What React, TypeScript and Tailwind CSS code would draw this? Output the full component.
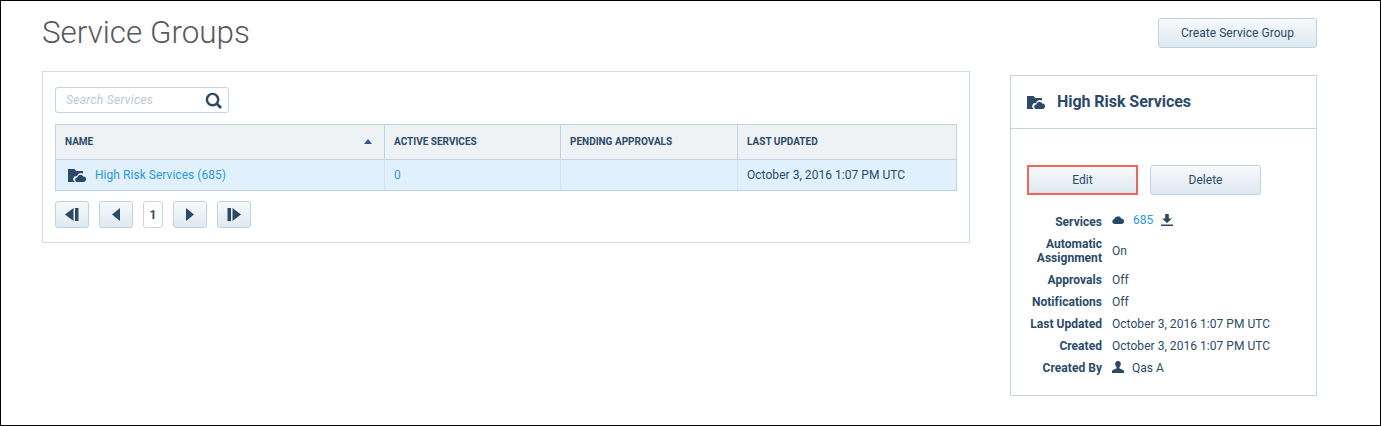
function FolderCloud({ className }: { className?: string }) {
  return (
    <svg viewBox="0 0 18 13" className={className} fill="currentColor">
      <path d="M0 0h6.500l1.500 2h7v2.600a4 4 0 0 0-5.900 2.400A3.200 3.200 0 0 0 7 13H0z" />
      <path d="M9.500 13a2.200 2.200 0 0 1-.3-4.400 3.200 3.200 0 0 1 6-1 2.700 2.700 0 0 1 2.800 2.700A2.700 2.700 0 0 1 15.300 13z" />
    </svg>
  );
}

function PagerButton({ children }: { children: React.ReactNode }) {
  return (
    <button className="flex h-[27px] w-[34px] items-center justify-center rounded-[3px] border border-[#bdd2e2] bg-gradient-to-b from-[#f8fafb] to-[#dfe9f1]">
      {children}
    </button>
  );
}

function ActionButton({ label, className }: { label: string; className: string }) {
  return (
    <button className={`flex h-[30px] items-center justify-center bg-gradient-to-b from-[#f8fafb] to-[#dce8f0] text-[12px] text-[#2a4a68] ${className}`}>
      {label}
    </button>
  );
}

function Detail({ label, children }: { label: React.ReactNode; children: React.ReactNode }) {
  return (
    <div className="flex items-center">
      <div className="w-[75px] text-right font-bold leading-[14px]">{label}</div>
      <div className="ml-[10px] flex items-center leading-[14px]">{children}</div>
    </div>
  );
}

export default function App() {
  const date = "October 3, 2016 1:07 PM UTC";
  return (
    <div className="h-[426px] w-[1381px] border border-black bg-white pl-[41px] pr-[63px] font-['Roboto',sans-serif] text-[12px] tracking-[0.04px] text-[#2a4a68] antialiased">
      <div className="flex items-start justify-between pt-[17px]">
        <h1 className="text-[31.4px] font-light leading-[30px] tracking-normal text-[#55595d]">Service Groups</h1>
        <ActionButton label="Create Service Group" className="w-[159px] rounded-[3px] border border-[#bdd2e2]" />
      </div>

      <div className="flex items-start justify-between">
        <section className="mt-[23px] h-[172px] w-[928px] border border-[#d0dce6] px-3 pt-[15px]">
          <div className="flex h-[26px] w-[174px] items-center justify-between rounded-[3px] border border-[#c5d6e4] pl-[10px] pr-[6px]">
            <span className="text-[12px] italic tracking-[0.3px] text-[#b9c9d8]">Search Services</span>
            <svg viewBox="0 0 18 18" className="h-[17px] w-[17px] text-[#2a4a68]" fill="none" stroke="currentColor">
              <circle cx="8" cy="8" r="6" strokeWidth="2.6" />
              <path d="M12.500 12.500L17 17" strokeWidth="3" />
            </svg>
          </div>

          <div className="mt-[11px] w-[902px] border border-[#c3d2e0]">
            <div className="flex h-[35px] border-b border-[#c3d2e0] bg-[#eff2f5] pb-[1px] text-[10px] font-bold tracking-normal">
              <div className="-mb-[1px] flex w-[329px] items-center justify-between border-r border-[#c3d2e0] pb-[1px] pl-[9px] pr-[12px]">
                <span>NAME</span>
                <span className="h-0 w-0 border-x-[4px] border-b-[5px] border-x-transparent border-b-[#2f5a86]" />
              </div>
              <div className="-mb-[1px] flex w-[176px] items-center border-r border-[#c3d2e0] pb-[1px] pl-[9px]">ACTIVE SERVICES</div>
              <div className="-mb-[1px] flex w-[177px] items-center border-r border-[#c3d2e0] pb-[1px] pl-[9px]">PENDING APPROVALS</div>
              <div className="flex flex-1 items-center pl-[9px]">LAST UPDATED</div>
            </div>
            <div className="flex h-[30px] bg-[#e0f1fd]">
              <div className="flex w-[329px] items-center border-r border-[#d2e4f0] pl-[12px] text-[#2d97dc]">
                <FolderCloud className="h-[13px] w-[18px] text-[#2a4a68]" />
                <span className="ml-[9px]">High Risk Services (685)</span>
              </div>
              <div className="flex w-[176px] items-center border-r border-[#d2e4f0] pl-[9px] text-[#2d97dc]">0</div>
              <div className="w-[177px] border-r border-[#d2e4f0]" />
              <div className="flex flex-1 items-center pl-[9px]">{date}</div>
            </div>
          </div>

          <div className="mt-[10px] flex items-center gap-[10px]">
            <PagerButton>
              <svg viewBox="0 0 14 13" className="h-[13px] w-[14px]" fill="#2a4a68"><path d="M8.500 0v13L0 6.500zM10 0h3.500v13H10z" /></svg>
            </PagerButton>
            <PagerButton>
              <svg viewBox="0 0 8 13" className="h-[13px] w-[8px]" fill="#2a4a68"><path d="M8 0v13L0 6.500z" /></svg>
            </PagerButton>
            <div className="flex h-[27px] w-[20px] items-center justify-center rounded-[3px] border border-[#c5d6e4] font-bold">1</div>
            <PagerButton>
              <svg viewBox="0 0 8 13" className="h-[13px] w-[8px]" fill="#2a4a68"><path d="M0 0v13l8-6.500z" /></svg>
            </PagerButton>
            <PagerButton>
              <svg viewBox="0 0 14 13" className="h-[13px] w-[14px]" fill="#2a4a68"><path d="M5.500 0v13L14 6.500zM.5 0H4v13H.5z" /></svg>
            </PagerButton>
          </div>
        </section>

        <aside className="mt-[27px] h-[321px] w-[307px] border border-[#c3d5e3]">
          <div className="flex h-[53px] items-center border-b border-[#c3d5e3] pl-4">
            <FolderCloud className="h-[13px] w-[18px]" />
            <h2 className="ml-3 text-[16px] font-bold tracking-[-0.05px]">High Risk Services</h2>
          </div>
          <div className="flex gap-3 pl-4 pt-9">
            <ActionButton label="Edit" className="w-[111px] border-2 border-[#f0655a]" />
            <ActionButton label="Delete" className="w-[111px] rounded-[3px] border border-[#bdd2e2]" />
          </div>
          <div className="mt-5 flex flex-col gap-2 pl-4">
            <Detail label="Services">
              <div className="flex h-[14px] -translate-y-[2px] items-center">
                <svg viewBox="0 0 12 8" className="h-[8px] w-[12px]" fill="currentColor">
                  <path d="M2.400 8A2.400 2.400 0 0 1 2 3.300a3.900 3.900 0 0 1 7.300-.7A2.700 2.700 0 0 1 9.400 8z" />
                </svg>
                <span className="ml-[9px] text-[#2d97dc]">685</span>
                <svg viewBox="0 0 12 12" className="ml-[8px] h-[12px] w-[12px]" fill="currentColor">
                  <path d="M4.200 0h3.600v4.500H11L6 9 1 4.500h3.200zM0 10.500h12V12H0z" />
                </svg>
              </div>
            </Detail>
            <Detail label={<>Automatic<br />Assignment</>}>On</Detail>
            <Detail label="Approvals">Off</Detail>
            <Detail label="Notifications">Off</Detail>
            <Detail label="Last Updated">{date}</Detail>
            <Detail label="Created">{date}</Detail>
            <Detail label="Created By">
              <svg viewBox="0 0 12 12" className="h-[12px] w-[12px] -translate-y-[1px]" fill="currentColor">
                <path d="M6 0c1.800 0 2.800 1.300 2.800 3.100 0 1.300-.6 2.500-1.400 3.100v1.100L12 9.500V12H0V9.500l4.600-2.200V6.200C3.800 5.600 3.200 4.400 3.200 3.100 3.200 1.300 4.200 0 6 0z" />
              </svg>
              <span className="ml-[8px]">Qas A</span>
            </Detail>
          </div>
        </aside>
      </div>
    </div>
  );
}
